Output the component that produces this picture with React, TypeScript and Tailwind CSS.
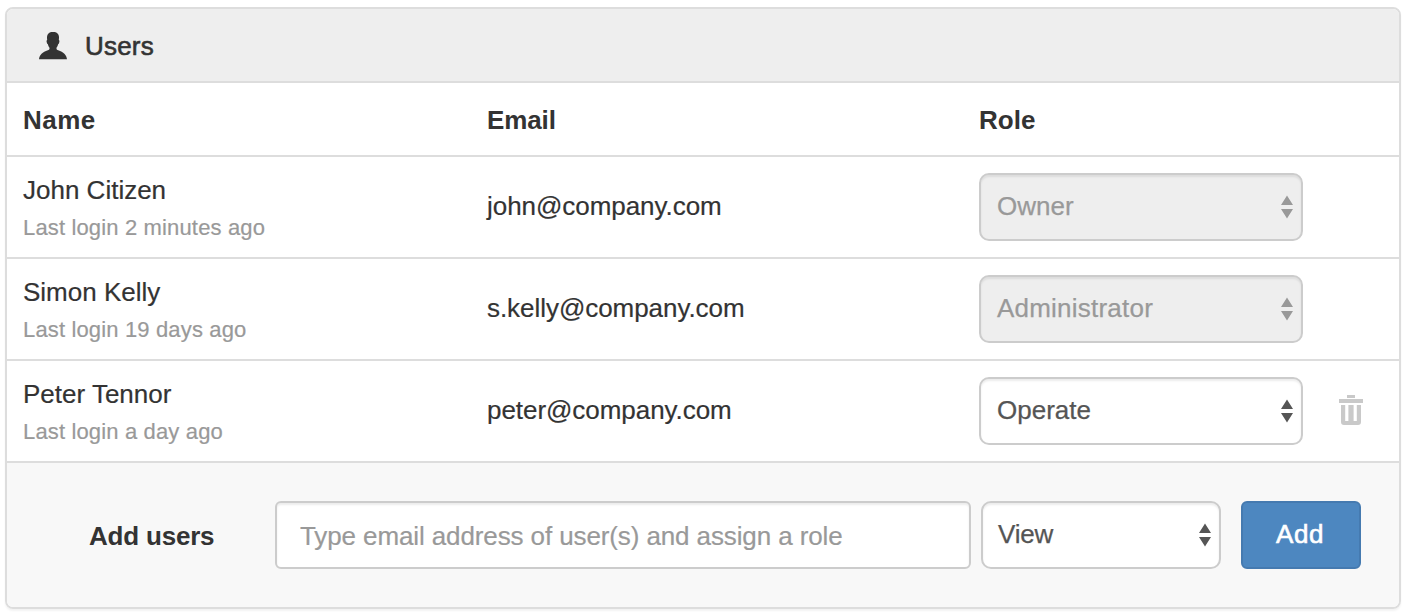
import React from "react";

type User = {
  name: string;
  lastLogin: string;
  email: string;
  role: string;
  locked: boolean;
};

const users: User[] = [
  { name: "John Citizen", lastLogin: "Last login 2 minutes ago", email: "john@company.com", role: "Owner", locked: true },
  { name: "Simon Kelly", lastLogin: "Last login 19 days ago", email: "s.kelly@company.com", role: "Administrator", locked: true },
  { name: "Peter Tennor", lastLogin: "Last login a day ago", email: "peter@company.com", role: "Operate", locked: false },
];

function UserIcon() {
  return (
    <svg className="mt-0.5 h-7 w-7 shrink-0" viewBox="0 0 28 28" fill="#333333" aria-hidden="true">
      <path d="M14 0C18 0 20 2 20 5.5C20 6.6 19.9 7.4 19.8 8C20.5 8.2 20.6 9.3 20.2 10.6C19.9 11.7 19.6 12.1 19.1 12.3C18.8 13.8 18.2 14.8 17.5 15.7V16.8C17.6 17.6 18.2 18 19.2 18.3C24.4 20 27.6 23 28 27.2H0C.4 23 3.6 20 8.8 18.3C9.8 18 10.4 17.6 10.5 16.8V15.7C9.8 14.8 9.2 13.8 8.9 12.3C8.4 12.1 8.1 11.7 7.8 10.6C7.4 9.3 7.5 8.2 8.2 8C8.1 7.4 8 6.6 8 5.5C8 2 10 0 14 0Z" />
    </svg>
  );
}

function TrashIcon() {
  return (
    <svg className="-mt-0.5 h-[30px] w-6" viewBox="0 0 24 30" aria-hidden="true">
      <path fill="#c9c9c9" d="M8 0H16V3H8ZM0 4H24V8H0Z" />
      <path fill="#c9c9c9" d="M2 10H6.2V26H9.4V10H14.6V26H17.8V10H22V27Q22 30 19 30H5Q2 30 2 27Z" />
    </svg>
  );
}

function RoleSelect({ value, disabled = false, className }: { value: string; disabled?: boolean; className: string }) {
  const tone = disabled ? "bg-[#eeeeee] text-[#999999]" : "bg-white text-[#555555]";
  return (
    <button
      type="button"
      disabled={disabled}
      className={`flex h-[68px] items-center justify-between rounded-[10px] border-2 border-[#cccccc] pr-2 pb-0.5 shadow-[inset_0_2px_2px_rgba(0,0,0,0.075)] ${tone} ${className}`}
    >
      <span className="[-webkit-text-stroke:0.25px_currentColor]">{value}</span>
      <svg className="mt-0.5 h-6 w-3" viewBox="0 0 12 24" fill="currentColor" aria-hidden="true">
        <path d="M6 0.5L12 10H0ZM0 14H12L6 23.5Z" />
      </svg>
    </button>
  );
}

export default function App() {
  return (
    <div className="h-[616px] bg-white pt-[7px] pr-1.5 pl-[5px] font-['Liberation_Sans',Arial,sans-serif] text-[26px] leading-9 text-[#333333]">
      <section className="h-[602px] overflow-hidden rounded-lg border-2 border-[#dddddd] shadow-[0_2px_2px_rgba(0,0,0,0.05)]">
        <header className="flex h-[74px] items-center gap-[18px] border-b-2 border-[#dddddd] bg-[#eeeeee] pl-8">
          <UserIcon />
          <h1 className="pt-0.5 tracking-[0.2px] [-webkit-text-stroke:0.6px_#333333]">Users</h1>
        </header>

        <div className="grid h-[74px] grid-cols-[464px_492px_1fr] items-center border-b-2 border-[#dddddd] pt-0.5 pl-4 font-bold">
          <div className="tracking-[0.5px]">Name</div>
          <div className="tracking-[-0.1px]">Email</div>
          <div>Role</div>
        </div>

        {users.map((user) => (
          <div key={user.email} className="grid h-[102px] grid-cols-[464px_492px_1fr] items-center border-b-2 border-[#dddddd] pl-4">
            <div className="pt-[3px] [-webkit-text-stroke:0.2px_currentColor]">
              <div>{user.name}</div>
              <div className="pt-0.5 text-[22px] tracking-[0.15px] text-[#999999]">{user.lastLogin}</div>
            </div>
            <div className="pb-0.5 tracking-[-0.05px] [-webkit-text-stroke:0.2px_currentColor]">{user.email}</div>
            <div className="flex items-center gap-9">
              <RoleSelect
                value={user.role}
                disabled={user.locked}
                className={user.role === "Administrator" ? "w-[324px] pl-4 tracking-[0.22px]" : "w-[324px] pl-4"}
              />
              {!user.locked && (
                <button type="button" aria-label="Delete user">
                  <TrashIcon />
                </button>
              )}
            </div>
          </div>
        ))}

        <form className="flex h-36 items-center bg-[#f8f8f8] pl-[82px]">
          <label htmlFor="email" className="w-[186px] pt-0.5 font-bold tracking-[-0.2px]">Add users</label>
          <input
            id="email"
            placeholder="Type email address of user(s) and assign a role"
            className="mr-2.5 h-[68px] w-[696px] rounded-md border-2 border-[#cccccc] bg-white px-[23px] pt-0.5 tracking-[-0.11px] shadow-[inset_0_2px_2px_rgba(0,0,0,0.075)] [-webkit-text-stroke:0.2px_#999999] placeholder:text-[#999999]"
          />
          <RoleSelect value="View" className="mr-5 w-60 pl-[15px] tracking-[-0.2px]" />
          <button type="button" className="h-[68px] w-[120px] rounded-md border-2 border-[#457ab0] bg-[#4d87c0] pr-0.5 pb-0.5 tracking-[0.5px] text-white [-webkit-text-stroke:0.6px_#ffffff]">
            Add
          </button>
        </form>
      </section>
    </div>
  );
}
